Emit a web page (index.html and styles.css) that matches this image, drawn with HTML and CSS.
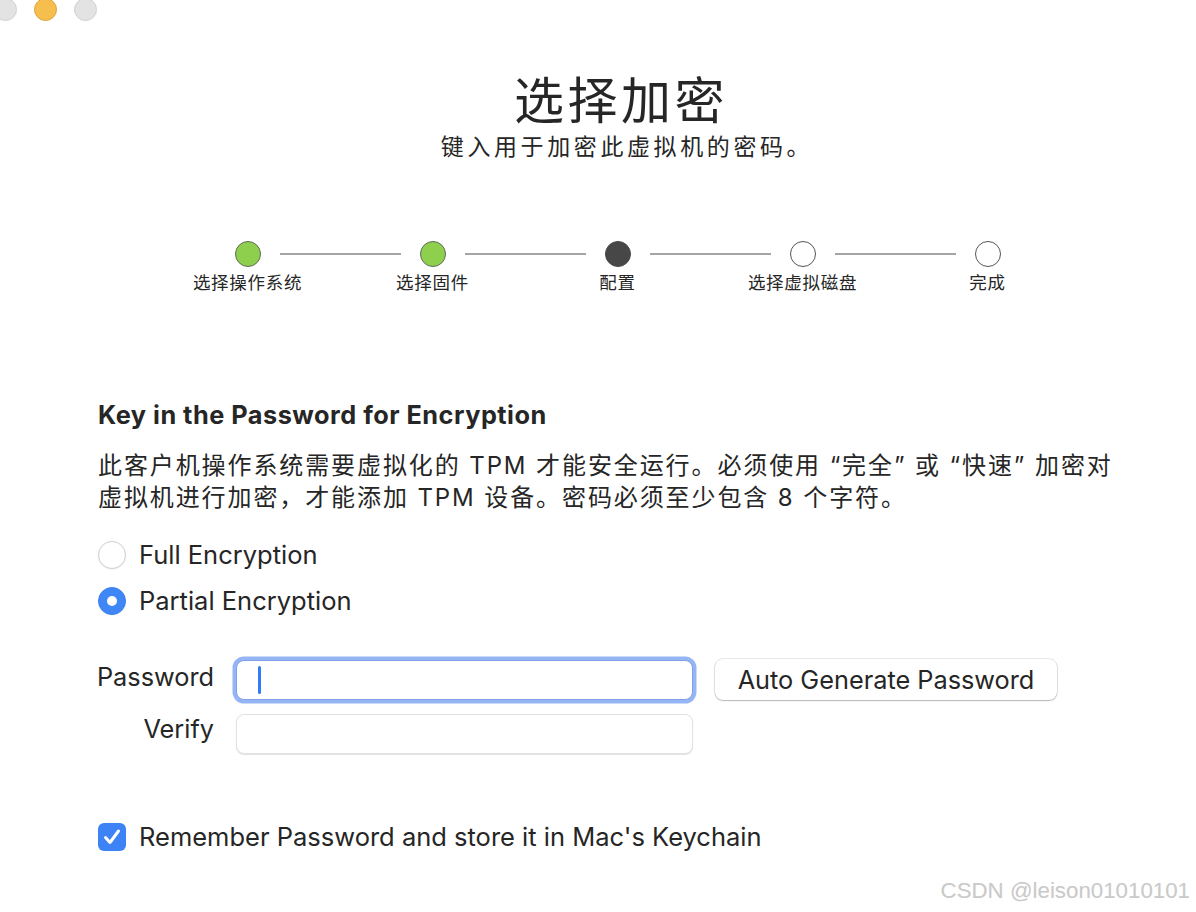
FILE: index.html
```html
<!DOCTYPE html>
<html lang="zh-CN">
<head>
<meta charset="utf-8">
<title>选择加密</title>
<link rel="stylesheet" href="styles.css">
</head>
<body>
<div class="window">
  <div class="traffic">
    <span class="light light-close"></span>
    <span class="light light-min"></span>
    <span class="light light-max"></span>
  </div>

  <header class="header">
    <h1 class="title">选择加密</h1>
    <p class="subtitle">键入用于加密此虚拟机的密码。</p>
  </header>

  <ol class="stepper">
    <li class="step step-first done">
      <div class="step-track"><span class="half"></span><span class="dot"></span><span class="half"></span></div>
      <span class="step-label">选择操作系统</span>
    </li>
    <li class="step done">
      <div class="step-track"><span class="half"></span><span class="dot"></span><span class="half"></span></div>
      <span class="step-label">选择固件</span>
    </li>
    <li class="step current">
      <div class="step-track"><span class="half"></span><span class="dot"></span><span class="half"></span></div>
      <span class="step-label">配置</span>
    </li>
    <li class="step">
      <div class="step-track"><span class="half"></span><span class="dot"></span><span class="half"></span></div>
      <span class="step-label">选择虚拟磁盘</span>
    </li>
    <li class="step step-last">
      <div class="step-track"><span class="half"></span><span class="dot"></span><span class="half"></span></div>
      <span class="step-label">完成</span>
    </li>
  </ol>

  <section class="section">
    <h2 class="section-title">Key in the Password for Encryption</h2>
    <p class="desc">此客户机操作系统需要虚拟化的 TPM 才能安全运行。必须使用 “完全” 或 “快速” 加密对<br>虚拟机进行加密，才能添加 TPM 设备。密码必须至少包含 8 个字符。</p>

    <div class="radios">
      <div class="radio-row"><span class="radio"></span><span class="opt-label">Full Encryption</span></div>
      <div class="radio-row"><span class="radio radio-on"></span><span class="opt-label">Partial Encryption</span></div>
    </div>

    <div class="form">
      <span class="field-label">Password</span>
      <div class="field field-focus"><span class="caret"></span></div>
      <div class="btn">Auto Generate Password</div>
      <span class="field-label field-label-2">Verify</span>
      <div class="field"></div>
    </div>

    <div class="check-row">
      <span class="checkbox">
        <svg viewBox="0 0 28 28" width="28" height="28"><path d="M7.5 14.5 L12 19.5 L20.5 8" fill="none" stroke="#fff" stroke-width="3" stroke-linecap="round" stroke-linejoin="round"/></svg>
      </span>
      <span class="opt-label">Remember Password and store it in Mac's Keychain</span>
    </div>
  </section>

  <div class="watermark">CSDN @leison01010101</div>
</div>
</body>
</html>
```

FILE: styles.css
```css
* { box-sizing: border-box; }

html, body {
  margin: 0;
  padding: 0;
  background: #fff;
}

body {
  font-family: "Inter", "Noto Sans CJK SC", sans-serif;
  color: #262626;
}

.window {
  position: relative;
  width: 1196px;
  height: 912px;
  overflow: hidden;
  background: #fff;
}

/* traffic lights */
.traffic {
  display: flex;
  gap: 17px;
  margin: -2px 0 0 -6px;
  height: 23px;
}
.light {
  width: 23px;
  height: 23px;
  border-radius: 50%;
  background: #e3e3e3;
  border: 1px solid #d0d0d0;
}
.light-min {
  background: #f6be4f;
  border-color: #dea43a;
}

/* header */
.header {
  margin-left: 40px;
  width: 1156px;
  text-align: center;
}
.title {
  margin: 48px 0 0;
  padding-left: 6px;
  font-family: "Noto Sans CJK SC", sans-serif;
  font-weight: 400;
  font-size: 50px;
  line-height: 56px;
  letter-spacing: 3.5px;
  color: #262626;
}
.subtitle {
  margin: 5px 0 0;
  padding-left: 18px;
  font-family: "Noto Sans CJK SC", sans-serif;
  font-size: 23px;
  line-height: 30px;
  letter-spacing: 3.6px;
  color: #262626;
}

/* stepper */
.stepper {
  list-style: none;
  margin: 81px 0 0;
  padding: 0 0 0 155px;
  display: flex;
}
.step {
  width: 185px;
  display: flex;
  flex-direction: column;
  align-items: center;
}
.step-track {
  width: 100%;
  display: flex;
  align-items: center;
  height: 26px;
}
.half {
  flex: 1;
  height: 2px;
  background: #a5a5a5;
}
.half:first-child { margin-right: 19px; }
.half:last-child { margin-left: 19px; }
.step-first .half:first-child,
.step-last .half:last-child { visibility: hidden; }
.dot {
  width: 26px;
  height: 26px;
  border-radius: 50%;
  border: 1.5px solid #555;
  background: #fff;
  flex: none;
}
.done .dot {
  background: #8ed04e;
  border: 1px solid #5f6b57;
}
.current .dot {
  background: #474747;
  border-color: #474747;
}
.step-label {
  margin-top: 3px;
  font-family: "Noto Sans CJK SC", sans-serif;
  font-size: 17.5px;
  line-height: 24px;
  letter-spacing: 0.7px;
  color: #262626;
}

/* section */
.section {
  padding-left: 98px;
  margin-top: 106px;
}
.section-title {
  margin: 0;
  font-size: 25.3px;
  line-height: 30px;
  font-weight: 700;
  letter-spacing: 0.5px;
  color: #262626;
}
.desc {
  margin: 20px 0 0;
  font-size: 24px;
  line-height: 32px;
  letter-spacing: 1.9px;
  color: #262626;
}

.radios {
  margin-top: 23px;
  display: flex;
  flex-direction: column;
  gap: 10px;
}
.radio-row, .check-row {
  display: flex;
  align-items: center;
  gap: 13px;
  height: 36px;
}
.opt-label {
  font-size: 25.5px;
  line-height: 30px;
  color: #262626;
}
.radio {
  width: 28px;
  height: 28px;
  border-radius: 50%;
  background: #fff;
  border: 1px solid #cfcfcf;
  box-shadow: 0 0.5px 1px rgba(0,0,0,0.08);
  display: flex;
  align-items: center;
  justify-content: center;
}
.radio-on {
  background: #3f86f7;
  border-color: #3a7ff0;
}
.radio-on::after {
  content: "";
  width: 10px;
  height: 10px;
  border-radius: 50%;
  background: #fff;
}

/* form */
.form {
  margin-top: 41px;
  display: grid;
  grid-template-columns: 116px 457px auto;
  column-gap: 22px;
  row-gap: 14px;
  align-items: start;
}
.field-label {
  justify-self: end;
  font-size: 25.3px;
  line-height: 30px;
  padding-top: 2px;
}
.field-label-2 {
  padding-top: 0;
}
.field {
  height: 40px;
  border-radius: 8px;
  background: #fff;
  border: 1px solid #e2e2e2;
  box-shadow: 0 1px 1px rgba(0,0,0,0.12);
  display: flex;
  align-items: center;
  padding-left: 21px;
}
.field-focus {
  border: 1px solid #7da2ea;
  box-shadow: 0 0 0 3.5px #95b5f4;
}
.caret {
  width: 3px;
  height: 28px;
  border-radius: 1.5px;
  background: #2f7cf6;
}
.btn {
  width: 342px;
  height: 41px;
  margin-top: -1px;
  border-radius: 8px;
  background: #fff;
  box-shadow: 0 0 0 0.5px rgba(0,0,0,0.18), 0 1px 1.5px rgba(0,0,0,0.22);
  font-size: 25.3px;
  line-height: 41px;
  text-align: center;
  color: #262626;
}

.check-row {
  margin-top: 65px;
}
.checkbox {
  width: 28px;
  height: 28px;
  border-radius: 6px;
  background: #3d83f5;
  display: flex;
}

.watermark {
  position: absolute;
  right: 6px;
  top: 878px;
  font-family: "Liberation Sans", sans-serif;
  font-size: 22.3px;
  line-height: 26px;
  color: #cacaca;
  text-shadow: 0 0 1px rgba(0,0,0,0.06);
}
```
